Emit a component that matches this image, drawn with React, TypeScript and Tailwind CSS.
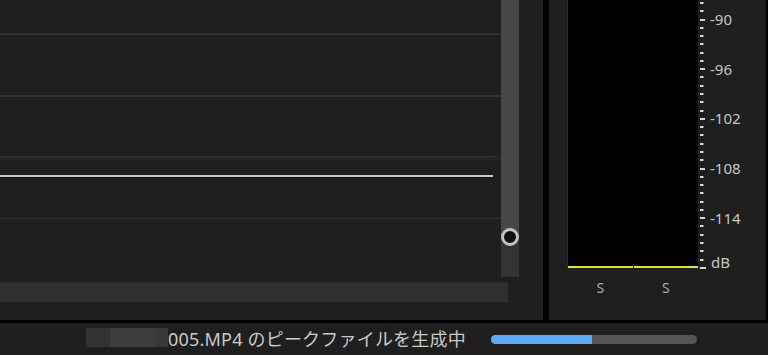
import React from "react";

const ticks: number[] = [];
for (let k = -2; k <= 30; k++) ticks.push(k);
const labels: { k: number; t: string }[] = [
  { k: 0, t: "-90" },
  { k: 6, t: "-96" },
  { k: 12, t: "-102" },
  { k: 18, t: "-108" },
  { k: 24, t: "-114" },
];
const yc = (k: number) => 19.5 + 8.28 * k;

function Graph() {
  return (
    <svg width="501" height="282" className="block shrink-0">
      <rect x="0" y="33" width="501" height="2" fill="#303030" />
      <rect x="0" y="95" width="501" height="2" fill="#2f2f2f" />
      <rect x="0" y="156" width="495" height="2" fill="#2f2f2f" />
      <rect x="495" y="156" width="6" height="2" fill="#262626" />
      <rect x="0" y="159" width="501" height="1" fill="#292929" />
      <rect x="0" y="175" width="493" height="2" fill="#c9c9c9" />
      <rect x="0" y="177" width="493" height="1" fill="#151515" />
      <rect x="0" y="218" width="501" height="1" fill="#303030" />
    </svg>
  );
}

function Slider() {
  return (
    <div className="relative w-[18px] h-[277px] flex flex-col shrink-0">
      <div className="h-[237px] bg-[#474747]" />
      <div className="flex-1 bg-[#343434]" />
      <div className="absolute left-0 top-[228px] w-[18px] h-[18px] rounded-full border-[3px] border-[#c2c2c2] bg-[#111111]" />
    </div>
  );
}

function Scale() {
  return (
    <div className="relative w-[68px] h-full shrink-0">
      <svg width="68" height="280" className="absolute left-0 top-0">
        {ticks.map((k) => {
          const isLabel = k % 6 === 0;
          return (
            <rect
              key={k}
              x="2"
              y={Math.round(yc(k) - 1)}
              width={k === 30 ? 6 : isLabel ? 5 : 3.5}
              height="2"
              fill="#d6d6d6"
            />
          );
        })}
      </svg>
      {labels.map((l) => (
        <div
          key={l.t}
          className="absolute left-[12px] text-[15px] leading-[18px] text-[#c6c6c6]"
          style={{ top: Math.round(yc(l.k) - 9.5) }}
        >
          {l.t}
        </div>
      ))}
      <div className="absolute left-[13px] top-[253px] text-[15px] leading-[18px] text-[#c6c6c6]">
        dB
      </div>
    </div>
  );
}

export default function App() {
  return (
    <div
      className="w-[768px] h-[355px] bg-[#1f1f1f] flex flex-col overflow-hidden"
      style={{ fontFamily: '"Noto Sans", "Noto Sans CJK JP", sans-serif' }}
    >
      <div className="h-[320px] flex">
        {/* left panel */}
        <div className="w-[543px] flex flex-col">
          <div className="h-[282px] flex items-start">
            <Graph />
            <Slider />
          </div>
          <div className="h-[20px] w-[508px] bg-[#303030] border-t border-[#2a2a2a]" />
        </div>
        <div className="w-[6px] bg-black" />
        {/* right panel */}
        <div className="w-[217px] flex">
          <div className="w-[18px]" />
          <div className="w-[131px] flex flex-col">
            <div className="h-[268px] flex border-l border-[#2b2b2b] bg-black">
              <div className="flex-1 flex flex-col justify-end">
                <div className="h-[2px] bg-[#e3e31a]" />
              </div>
              <div className="w-[1px]" />
              <div className="flex-1 flex flex-col justify-end">
                <div className="h-[2px] bg-[#e3e31a]" />
              </div>
            </div>
            <div className="flex pl-[1px] pt-[11px] text-[14px] leading-[18px] text-[#a8a8a8]">
              <div className="flex-1 text-center">S</div>
              <div className="w-[1px]" />
              <div className="flex-1 text-center">S</div>
            </div>
          </div>
          <Scale />
        </div>
        <div className="w-[2px] bg-black" />
      </div>
      <div className="h-[3px] bg-black" />
      {/* status bar */}
      <div className="h-[32px] flex items-center">
        <div className="ml-[86px] flex h-[19px] mt-[5px] self-start">
          <div className="w-[24px] bg-[#333333]" />
          <div className="w-[47px] bg-[#3d3d3d]" />
          <div className="w-[11px] bg-[#383838]" />
        </div>
        <div className="text-[18px] leading-[20px] tracking-[0.2px] text-[#c9c9c9] whitespace-nowrap">
          005.MP4 のピークファイルを生成中
        </div>
        <div className="ml-auto mr-[71px] w-[206px] h-[9px] rounded-full bg-[#555555] overflow-hidden flex">
          <div className="w-[101px] bg-[#5aaaf5]" />
        </div>
      </div>
    </div>
  );
}
